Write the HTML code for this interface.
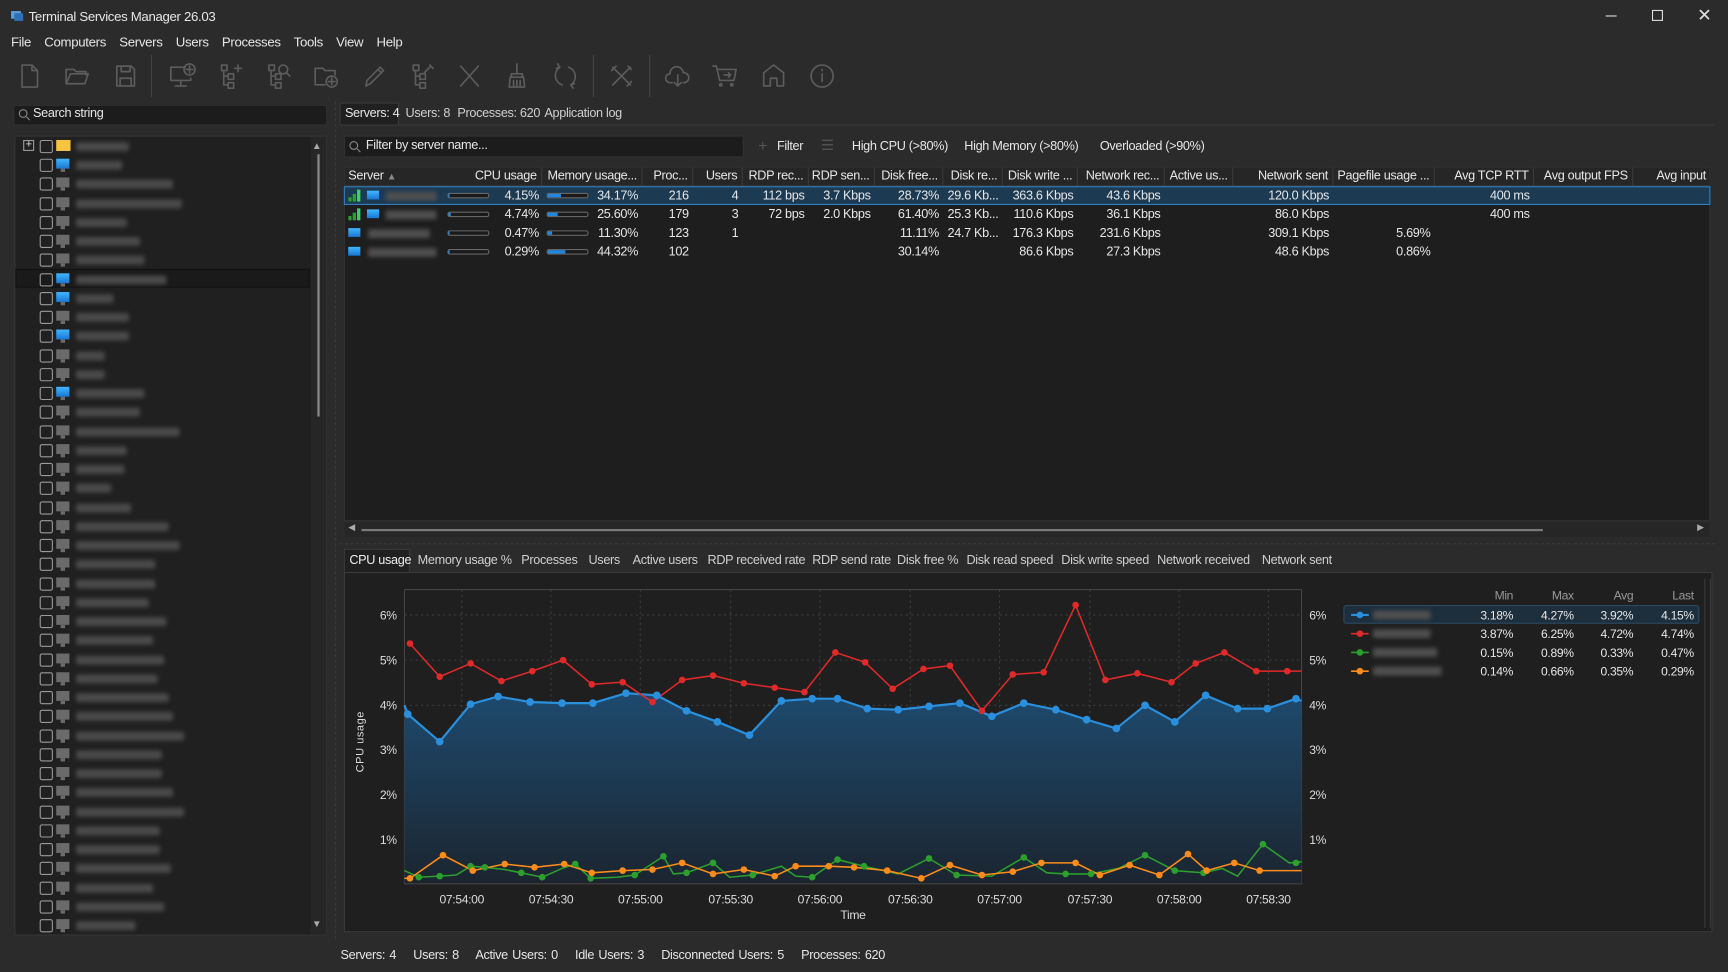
<!DOCTYPE html>
<html><head><meta charset="utf-8"><style>
*{box-sizing:border-box;margin:0;padding:0}
html,body{width:1728px;height:972px;overflow:hidden;background:#2b2b2b}
#s{position:absolute;left:0;top:0;width:1568px;height:882px;transform:scale(1.10204);transform-origin:0 0;background:#2b2b2b;font-family:"Liberation Sans",sans-serif;font-size:11.5px;color:#e6e6e6;letter-spacing:-0.3px}
.a{position:absolute;white-space:nowrap}
.ic{position:absolute;top:56px;width:26px;height:26px}
.ic svg{width:26px;height:26px;fill:none;stroke:#5c5c5c;stroke-width:1.5;stroke-linecap:round;stroke-linejoin:round}
.row{position:absolute;left:20px;height:17px;width:262px}
.cb{position:absolute;left:16px;top:3px;width:12px;height:12px;border:1px solid #9a9a9a;border-radius:2px}
.mon{position:absolute;left:31px;top:3px;width:12px;height:9px;background:#6a6a6a}
.mon:after{content:"";position:absolute;left:4px;top:9px;width:4px;height:3px;background:#6a6a6a}
.mon.b{background:linear-gradient(#3fb6ff,#1976d2)}
.nm{position:absolute;left:49px;top:5px;height:8px;background:#4a4a4a;filter:blur(2px);border-radius:2px}
.hd{position:absolute;top:152px;height:17px;line-height:17px;color:#e6e6e6;text-align:right;border-right:1px solid #3a3a3a;padding-right:4px}
.c{position:absolute;text-align:right;height:17px;line-height:17px}
.bar{position:absolute;width:38px;height:5px;border:1px solid #666;background:#1a1a1a;border-radius:2px}
.bar i{display:block;height:100%;background:#1e88e5}
.tab{position:absolute;top:500px;color:#cfcfcf}
</style></head><body><div id="s">
<svg class="a" style="left:9px;top:8px" width="13" height="13"><rect x="1" y="2" width="9" height="7" fill="#5b9bd5"/><rect x="4" y="4" width="8" height="7" fill="#2e6fb8"/></svg>
<div class="a" style="left:26px;top:8px;font-size:12px">Terminal Services Manager 26.03</div>
<div class="a" style="left:1457px;top:14px;width:10px;height:1px;background:#ddd"></div>
<div class="a" style="left:1499px;top:9px;width:10px;height:10px;border:1px solid #ddd"></div>
<div class="a" style="left:1540px;top:4px;font-size:16px;color:#ddd">✕</div>
<div class="a" style="left:10px;top:31px;font-size:12px;word-spacing:9px">File Computers Servers Users Processes Tools View Help</div>
<div class="ic" style="left:14px"><svg viewBox="0 0 26 26"><path d="M6 3h9l5 5v15H6z M15 3v5h5"/></svg></div>
<div class="ic" style="left:57px"><svg viewBox="0 0 26 26"><path d="M3 7h7l2 2h9v3 M3 7v13h17l3-9H7l-4 9"/></svg></div>
<div class="ic" style="left:101px"><svg viewBox="0 0 26 26"><path d="M5 4h13l3 3v15H5z M9 4v5h8V4 M8 22v-7h10v7"/></svg></div>
<div class="a" style="left:137px;top:50px;width:1px;height:38px;background:#444"></div>
<div class="ic" style="left:152px"><svg viewBox="0 0 26 26"><path d="M16 5H3v12h18v-2 M12 17v4 M7 22h10"/><circle cx="20" cy="7" r="5"/><path d="M20 4v6M17 7h6"/></svg></div>
<div class="ic" style="left:197px"><svg viewBox="0 0 26 26"><rect x="4" y="3" width="5" height="5"/><rect x="10" y="11" width="5" height="5"/><rect x="10" y="19" width="5" height="5"/><path d="M6 8v13h4M6 13h4M19 3v6M16 6h6"/></svg></div>
<div class="ic" style="left:240px"><svg viewBox="0 0 26 26"><rect x="4" y="3" width="5" height="5"/><rect x="10" y="11" width="5" height="5"/><rect x="10" y="19" width="5" height="5"/><path d="M6 8v13h4M6 13h4"/><circle cx="17" cy="7" r="4"/><path d="M20 10l3 3"/></svg></div>
<div class="ic" style="left:283px"><svg viewBox="0 0 26 26"><path d="M3 6h7l2 2h9v4 M3 6v15h9"/><circle cx="18" cy="18" r="5"/><path d="M18 15v6M15 18h6"/></svg></div>
<div class="ic" style="left:327px"><svg viewBox="0 0 26 26"><path d="M5 22l1-5L18 5l3 3L9 20z M16 7l3 3"/></svg></div>
<div class="ic" style="left:371px"><svg viewBox="0 0 26 26"><rect x="4" y="3" width="5" height="5"/><rect x="10" y="11" width="5" height="5"/><rect x="10" y="19" width="5" height="5"/><path d="M6 8v13h4M6 13h4M14 10l6-6M19 3l3 3"/></svg></div>
<div class="ic" style="left:413px"><svg viewBox="0 0 26 26"><path d="M5 4l16 18M21 4L5 22"/></svg></div>
<div class="ic" style="left:456px"><svg viewBox="0 0 26 26"><path d="M13 2v9 M8 11h10v3H8z M7 14l-1 9h14l-1-9 M10 17v5M13 17v5M16 17v5"/></svg></div>
<div class="ic" style="left:500px"><svg viewBox="0 0 26 26"><path d="M8 5a9 9 0 0 0 2 16 M18 21a9 9 0 0 0-2-16 M6 2l2 3-3 1 M20 24l-2-3 3-1"/></svg></div>
<div class="a" style="left:538px;top:50px;width:1px;height:38px;background:#444"></div>
<div class="ic" style="left:551px"><svg viewBox="0 0 26 26"><path d="M5 5l16 16M21 5L5 21M4 8l4-4M18 22l4-4M19 4l3 3"/></svg></div>
<div class="a" style="left:589px;top:50px;width:1px;height:38px;background:#444"></div>
<div class="ic" style="left:602px"><svg viewBox="0 0 26 26"><path d="M8 19H6a4 4 0 0 1 0-8 6 6 0 0 1 12-1 4 4 0 0 1 1 9h-1 M13 12v10M10 19l3 3 3-3"/></svg></div>
<div class="ic" style="left:645px"><svg viewBox="0 0 26 26"><path d="M2 4h3l3 13h13l2-10H6 M12 12h6M16 10l2 2-2 2"/><circle cx="9" cy="21" r="1"/><circle cx="19" cy="21" r="1"/></svg></div>
<div class="ic" style="left:689px"><svg viewBox="0 0 26 26"><path d="M4 22V10l9-7 9 7v12h-6v-7h-6v7z"/></svg></div>
<div class="ic" style="left:733px"><svg viewBox="0 0 26 26"><circle cx="13" cy="13" r="10"/><path d="M13 11v7M13 7v1"/></svg></div>

<div class="a" style="left:12px;top:95px;width:285px;height:19px;background:#1c1c1c;border:1px solid #333"></div>
<svg class="a" style="left:16px;top:98px" width="12" height="12"><circle cx="5" cy="5" r="3.5" fill="none" stroke="#888"/><path d="M8 8l3 3" stroke="#888"/></svg>
<div class="a" style="left:30px;top:97px">Search string</div>
<div class="a" style="left:304px;top:92px;width:1px;height:760px;border-left:1px dashed #3a3a3a"></div>
<div class="a" style="left:13px;top:123px;width:284px;height:726px;background:#202020;border:1px solid #363636"></div>
<div class="a" style="left:282px;top:124px;width:14px;height:724px;background:#262626"></div>
<div class="a" style="left:283px;top:127px;font-size:9px;color:#aaa">▲</div>
<div class="a" style="left:283px;top:833px;font-size:9px;color:#aaa">▼</div>
<div class="a" style="left:288px;top:140px;width:2px;height:238px;background:#8a8a8a"></div>
<div class="a" style="left:14px;top:244px;width:267px;height:17px;background:#1a1a1a;border:1px solid #111"></div>

<div class="a" style="left:308px;top:93px;width:54px;height:21px;background:#202020;border:1px solid #3a3a3a;border-bottom:none"></div>
<div class="a" style="left:313px;top:97px">Servers: 4</div>
<div class="a" style="left:368px;top:97px;color:#cfcfcf">Users: 8</div>
<div class="a" style="left:415px;top:97px;color:#cfcfcf">Processes: 620</div>
<div class="a" style="left:494px;top:97px;color:#cfcfcf">Application log</div>
<div class="a" style="left:308px;top:113px;width:1248px;height:378px;background:#2b2b2b;border-top:1px solid #3a3a3a"></div>
<div class="a" style="left:312px;top:123px;width:363px;height:20px;background:#1c1c1c;border:1px solid #333"></div>
<svg class="a" style="left:316px;top:127px" width="12" height="12"><circle cx="5" cy="5" r="3.5" fill="none" stroke="#888"/><path d="M8 8l3 3" stroke="#888"/></svg>
<div class="a" style="left:332px;top:126px">Filter by server name...</div>
<div class="a" style="left:688px;top:124px;color:#555;font-size:14px">+</div>
<div class="a" style="left:705px;top:127px">Filter</div>
<div class="a" style="left:745px;top:124px;color:#555;font-size:13px">☰</div>
<div class="a" style="left:773px;top:127px">High CPU (&gt;80%)</div>
<div class="a" style="left:875px;top:127px">High Memory (&gt;80%)</div>
<div class="a" style="left:998px;top:127px">Overloaded (&gt;90%)</div>
<div class="a" style="left:312px;top:151px;width:1240px;height:322px;background:#1e1e1e;border:1px solid #333"></div>
<div class="a" style="left:313px;top:152px;width:1238px;height:17px;background:#262626;border-bottom:1px solid #3a3a3a"></div>
<div class="a" style="left:316px;top:154px">Server <span style="color:#888;font-size:9px">▲</span></div>
<div class="hd" style="left:402px;width:90px">CPU usage</div>
<div class="hd" style="left:492px;width:91px">Memory usage...</div>
<div class="hd" style="left:583px;width:46px">Proc...</div>
<div class="hd" style="left:629px;width:45px">Users</div>
<div class="hd" style="left:674px;width:60px">RDP rec...</div>
<div class="hd" style="left:734px;width:60px">RDP sen...</div>
<div class="hd" style="left:794px;width:62px">Disk free...</div>
<div class="hd" style="left:856px;width:54px">Disk re...</div>
<div class="hd" style="left:910px;width:68px">Disk write ...</div>
<div class="hd" style="left:978px;width:79px">Network rec...</div>
<div class="hd" style="left:1057px;width:62px">Active us...</div>
<div class="hd" style="left:1119px;width:91px">Network sent</div>
<div class="hd" style="left:1210px;width:92px">Pagefile usage ...</div>
<div class="hd" style="left:1302px;width:90px">Avg TCP RTT</div>
<div class="hd" style="left:1392px;width:90px">Avg output FPS</div>
<div class="hd" style="left:1482px;width:70px;border:none">Avg input</div>
<div class="a" style="left:312px;top:169px;width:1240px;height:17px;background:#1c3a52;border:1px solid #2f7fc0"></div>
<div class="a" style="left:313px;top:474px;width:1238px;height:13px;background:#262626"></div>
<div class="a" style="left:316px;top:474px;font-size:8px;color:#aaa">◀</div>
<div class="a" style="left:1540px;top:474px;font-size:8px;color:#aaa">▶</div>
<div class="a" style="left:328px;top:480px;width:1072px;height:2px;background:#7a7a7a"></div>

<div class="a" style="left:308px;top:493px;width:1248px;height:1px;border-top:1px dashed #3a3a3a"></div>
<div class="a" style="left:312px;top:498px;width:60px;height:21px;background:#202020;border:1px solid #3a3a3a;border-bottom:none"></div>
<div class="tab" style="left:317px;top:503px;color:#eee">CPU usage</div>
<div class="tab" style="left:379px;top:503px">Memory usage %</div>
<div class="tab" style="left:473px;top:503px">Processes</div>
<div class="tab" style="left:534px;top:503px">Users</div>
<div class="tab" style="left:574px;top:503px">Active users</div>
<div class="tab" style="left:642px;top:503px">RDP received rate</div>
<div class="tab" style="left:737px;top:503px">RDP send rate</div>
<div class="tab" style="left:814px;top:503px">Disk free %</div>
<div class="tab" style="left:877px;top:503px">Disk read speed</div>
<div class="tab" style="left:963px;top:503px">Disk write speed</div>
<div class="tab" style="left:1050px;top:503px">Network received</div>
<div class="tab" style="left:1145px;top:503px">Network sent</div>
<div class="a" style="left:312px;top:519px;width:1242px;height:327px;background:#1f1f1f;border:1px solid #3a3a3a"></div>

<svg class="a" style="left:0;top:0" width="1568" height="882" font-family="Liberation Sans" font-size="11">
<defs><linearGradient id="g" x1="0" y1="0" x2="0" y2="1"><stop offset="0" stop-color="#1e4a6e"/><stop offset="1" stop-color="#1b2530"/></linearGradient></defs>
<g stroke="#3d3d3d" stroke-dasharray="2 3">
<path d="M367 558H1181M367 599H1181M367 640H1181M367 680H1181M367 721H1181M367 762H1181"/>
<path d="M419 535V800M500 535V800M581 535V800M663 535V800M744 535V800M826 535V800M907 535V800M989 535V800M1070 535V800M1151 535V800"/>
</g>
<path d="M367 535H1181M367 535V802H1181V535" fill="none" stroke="#444"/>
<polygon fill="url(#g)" points="367,648 370,648 399,673 427,639 452,632 481,637 510,638 538,638 568,629 596,631 623,645 651,655 680,667 709,636 737,634 760,634 787,643 815,644 843,641 871,638 900,650 929,638 958,644 986,653 1013,661 1039,640 1066,655 1094,631 1123,643 1150,643 1176,634 1181,636 1181,801 367,801"/>
<g fill="none" stroke-width="1.4">
<polyline stroke="#2a8fdc" stroke-width="2" points="367,640 370,648 399,673 427,639 452,632 481,637 510,638 538,638 568,629 596,631 623,645 651,655 680,667 709,636 737,634 760,634 787,643 815,644 843,641 871,638 900,650 929,638 958,644 986,653 1013,661 1039,640 1066,655 1094,631 1123,643 1150,643 1176,634 1181,636"/>
<polyline stroke="#e02a2a" points="372,584 399,614 427,602 455,618 483,609 511,599 537,621 565,619 592,637 619,617 647,613 675,620 703,624 730,628 758,592 785,601 810,625 838,607 862,604 891,645 919,612 947,610 976,549 1003,617 1032,611 1063,619 1085,602 1111,592 1140,609 1168,609 1181,609"/>
<polyline stroke="#2ca02c" points="367,790 380,796 399,795 414,794 427,786 440,787 458,789 473,792 492,796 510,788 522,784 536,797 560,796 576,794 602,777 611,793 623,792 647,783 662,796 683,794 709,786 722,795 737,796 760,780 784,786 815,793 843,779 868,794 900,795 929,778 950,792 967,793 990,793 1015,788 1039,776 1066,790 1092,792 1109,788 1123,795 1146,766 1170,783 1181,782"/>
<polyline stroke="#ff8c1a" points="367,797 372,797 402,776 429,790 458,784 485,787 512,784 537,792 565,790 592,789 619,783 647,793 675,789 703,795 722,786 752,786 775,787 805,790 836,797 862,785 891,794 919,791 945,783 976,783 998,794 1025,785 1052,794 1078,775 1095,790 1120,783 1143,790 1168,790 1181,790"/>
</g>
<g fill="#2a8fdc"><circle cx="370" cy="648" r="3.5"/><circle cx="399" cy="673" r="3.5"/><circle cx="427" cy="639" r="3.5"/><circle cx="452" cy="632" r="3.5"/><circle cx="481" cy="637" r="3.5"/><circle cx="510" cy="638" r="3.5"/><circle cx="538" cy="638" r="3.5"/><circle cx="568" cy="629" r="3.5"/><circle cx="596" cy="631" r="3.5"/><circle cx="623" cy="645" r="3.5"/><circle cx="651" cy="655" r="3.5"/><circle cx="680" cy="667" r="3.5"/><circle cx="709" cy="636" r="3.5"/><circle cx="737" cy="634" r="3.5"/><circle cx="760" cy="634" r="3.5"/><circle cx="787" cy="643" r="3.5"/><circle cx="815" cy="644" r="3.5"/><circle cx="843" cy="641" r="3.5"/><circle cx="871" cy="638" r="3.5"/><circle cx="900" cy="650" r="3.5"/><circle cx="929" cy="638" r="3.5"/><circle cx="958" cy="644" r="3.5"/><circle cx="986" cy="653" r="3.5"/><circle cx="1013" cy="661" r="3.5"/><circle cx="1039" cy="640" r="3.5"/><circle cx="1066" cy="655" r="3.5"/><circle cx="1094" cy="631" r="3.5"/><circle cx="1123" cy="643" r="3.5"/><circle cx="1150" cy="643" r="3.5"/><circle cx="1176" cy="634" r="3.5"/></g>
<g fill="#e02a2a"><circle cx="372" cy="584" r="3"/><circle cx="399" cy="614" r="3"/><circle cx="427" cy="602" r="3"/><circle cx="455" cy="618" r="3"/><circle cx="483" cy="609" r="3"/><circle cx="511" cy="599" r="3"/><circle cx="537" cy="621" r="3"/><circle cx="565" cy="619" r="3"/><circle cx="592" cy="637" r="3"/><circle cx="619" cy="617" r="3"/><circle cx="647" cy="613" r="3"/><circle cx="675" cy="620" r="3"/><circle cx="703" cy="624" r="3"/><circle cx="730" cy="628" r="3"/><circle cx="758" cy="592" r="3"/><circle cx="785" cy="601" r="3"/><circle cx="810" cy="625" r="3"/><circle cx="838" cy="607" r="3"/><circle cx="862" cy="604" r="3"/><circle cx="891" cy="645" r="3"/><circle cx="919" cy="612" r="3"/><circle cx="947" cy="610" r="3"/><circle cx="976" cy="549" r="3"/><circle cx="1003" cy="617" r="3"/><circle cx="1032" cy="611" r="3"/><circle cx="1063" cy="619" r="3"/><circle cx="1085" cy="602" r="3"/><circle cx="1111" cy="592" r="3"/><circle cx="1140" cy="609" r="3"/><circle cx="1168" cy="609" r="3"/></g>
<g fill="#2ca02c"><circle cx="380" cy="796" r="3"/><circle cx="399" cy="795" r="3"/><circle cx="427" cy="786" r="3"/><circle cx="440" cy="787" r="3"/><circle cx="473" cy="792" r="3"/><circle cx="492" cy="796" r="3"/><circle cx="522" cy="784" r="3"/><circle cx="536" cy="797" r="3"/><circle cx="576" cy="794" r="3"/><circle cx="602" cy="777" r="3"/><circle cx="623" cy="792" r="3"/><circle cx="647" cy="783" r="3"/><circle cx="683" cy="794" r="3"/><circle cx="737" cy="796" r="3"/><circle cx="760" cy="780" r="3"/><circle cx="784" cy="786" r="3"/><circle cx="843" cy="779" r="3"/><circle cx="868" cy="794" r="3"/><circle cx="929" cy="778" r="3"/><circle cx="967" cy="793" r="3"/><circle cx="990" cy="793" r="3"/><circle cx="1039" cy="776" r="3"/><circle cx="1066" cy="790" r="3"/><circle cx="1092" cy="792" r="3"/><circle cx="1146" cy="766" r="3"/><circle cx="1176" cy="783" r="3"/></g>
<g fill="#ff8c1a"><circle cx="372" cy="797" r="3"/><circle cx="402" cy="776" r="3"/><circle cx="429" cy="790" r="3"/><circle cx="458" cy="784" r="3"/><circle cx="485" cy="787" r="3"/><circle cx="512" cy="784" r="3"/><circle cx="537" cy="792" r="3"/><circle cx="565" cy="790" r="3"/><circle cx="592" cy="789" r="3"/><circle cx="619" cy="783" r="3"/><circle cx="647" cy="793" r="3"/><circle cx="675" cy="789" r="3"/><circle cx="703" cy="795" r="3"/><circle cx="722" cy="786" r="3"/><circle cx="752" cy="786" r="3"/><circle cx="775" cy="787" r="3"/><circle cx="805" cy="790" r="3"/><circle cx="836" cy="797" r="3"/><circle cx="862" cy="785" r="3"/><circle cx="891" cy="794" r="3"/><circle cx="919" cy="791" r="3"/><circle cx="945" cy="783" r="3"/><circle cx="976" cy="783" r="3"/><circle cx="998" cy="794" r="3"/><circle cx="1025" cy="785" r="3"/><circle cx="1052" cy="794" r="3"/><circle cx="1078" cy="775" r="3"/><circle cx="1095" cy="790" r="3"/><circle cx="1120" cy="783" r="3"/><circle cx="1143" cy="790" r="3"/></g>
<g fill="#dcdcdc" text-anchor="end"><text x="360" y="562">6%</text><text x="360" y="603">5%</text><text x="360" y="644">4%</text><text x="360" y="684">3%</text><text x="360" y="725">2%</text><text x="360" y="766">1%</text></g>
<g fill="#dcdcdc"><text x="1188" y="562">6%</text><text x="1188" y="603">5%</text><text x="1188" y="644">4%</text><text x="1188" y="684">3%</text><text x="1188" y="725">2%</text><text x="1188" y="766">1%</text></g>
<g fill="#dcdcdc" text-anchor="middle"><text x="419" y="820">07:54:00</text><text x="500" y="820">07:54:30</text><text x="581" y="820">07:55:00</text><text x="663" y="820">07:55:30</text><text x="744" y="820">07:56:00</text><text x="826" y="820">07:56:30</text><text x="907" y="820">07:57:00</text><text x="989" y="820">07:57:30</text><text x="1070" y="820">07:58:00</text><text x="1151" y="820">07:58:30</text><text x="774" y="834">Time</text></g>
<text x="330" y="673" fill="#dcdcdc" text-anchor="middle" transform="rotate(-90 330 673)" font-size="10" letter-spacing="0.5">CPU usage</text>
<g fill="#999" text-anchor="end"><text x="1373" y="544">Min</text><text x="1428" y="544">Max</text><text x="1482" y="544">Avg</text><text x="1537" y="544">Last</text></g>
<rect x="1219.5" y="549.5" width="322" height="16" rx="2" fill="#1d2e3c" stroke="#2c4a62"/>
<path d="M1226 558h16" stroke="#2a8fdc" stroke-width="2"/><circle cx="1234" cy="558" r="3" fill="#2a8fdc"/>
<path d="M1226 575h16" stroke="#e02a2a" stroke-width="1.5"/><circle cx="1234" cy="575" r="3" fill="#e02a2a"/>
<path d="M1226 592h16" stroke="#2ca02c" stroke-width="1.5"/><circle cx="1234" cy="592" r="3" fill="#2ca02c"/>
<path d="M1226 609h16" stroke="#ff8c1a" stroke-width="1.5"/><circle cx="1234" cy="609" r="3" fill="#ff8c1a"/>
<g fill="#4f4f4f" style="filter:blur(2px)"><rect x="1246" y="554" width="52" height="8"/><rect x="1246" y="571" width="52" height="8"/><rect x="1246" y="588" width="58" height="8"/><rect x="1246" y="605" width="62" height="8"/></g>
<g fill="#e6e6e6" text-anchor="end">
<text x="1373" y="562">3.18%</text><text x="1428" y="562">4.27%</text><text x="1482" y="562">3.92%</text><text x="1537" y="562">4.15%</text>
<text x="1373" y="579">3.87%</text><text x="1428" y="579">6.25%</text><text x="1482" y="579">4.72%</text><text x="1537" y="579">4.74%</text>
<text x="1373" y="596">0.15%</text><text x="1428" y="596">0.89%</text><text x="1482" y="596">0.33%</text><text x="1537" y="596">0.47%</text>
<text x="1373" y="613">0.14%</text><text x="1428" y="613">0.66%</text><text x="1482" y="613">0.35%</text><text x="1537" y="613">0.29%</text>
</g>
<path d="M1547 525V842M1552 525V842" stroke="#3a3a3a"/>
</svg>

<div class="a" style="left:316px;top:172px"><svg width="12" height="11"><rect x="0" y="7" width="3" height="4" fill="#2ca02c"/><rect x="4" y="4" width="3" height="7" fill="#2ca02c"/><rect x="8" y="0" width="3" height="11" fill="#3fcf6f"/></svg></div>
<div class="a" style="left:316px;top:189px"><svg width="12" height="11"><rect x="0" y="7" width="3" height="4" fill="#2ca02c"/><rect x="4" y="4" width="3" height="7" fill="#2ca02c"/><rect x="8" y="0" width="3" height="11" fill="#3fcf6f"/></svg></div>
<div class="a" style="left:333px;top:173px;width:11px;height:8px;background:linear-gradient(#3fb6ff,#1976d2)"></div>
<div class="a" style="left:333px;top:190px;width:11px;height:8px;background:linear-gradient(#3fb6ff,#1976d2)"></div>
<div class="a" style="left:316px;top:207px;width:11px;height:8px;background:linear-gradient(#3fb6ff,#1976d2)"></div>
<div class="a" style="left:316px;top:224px;width:11px;height:8px;background:linear-gradient(#3fb6ff,#1976d2)"></div>
<div class="a" style="left:350px;top:174px;width:46px;height:8px;background:#4f4f4f;filter:blur(2px)"></div>
<div class="a" style="left:350px;top:191px;width:46px;height:8px;background:#4f4f4f;filter:blur(2px)"></div>
<div class="a" style="left:334px;top:208px;width:56px;height:8px;background:#4f4f4f;filter:blur(2px)"></div>
<div class="a" style="left:334px;top:225px;width:62px;height:8px;background:#4f4f4f;filter:blur(2px)"></div>
<div class="bar" style="left:406px;top:175px"><i style="width:4%"></i></div>
<div class="bar" style="left:406px;top:192px"><i style="width:5%"></i></div>
<div class="bar" style="left:406px;top:209px"><i style="width:1%"></i></div>
<div class="bar" style="left:406px;top:226px"><i style="width:1%"></i></div>
<div class="bar" style="left:496px;top:175px"><i style="width:34%"></i></div>
<div class="bar" style="left:496px;top:192px"><i style="width:26%"></i></div>
<div class="bar" style="left:496px;top:209px"><i style="width:11%"></i></div>
<div class="bar" style="left:496px;top:226px"><i style="width:44%"></i></div>
<div class="a" style="top:170px;left:0;height:17px;line-height:17px">
<span class="c" style="left:430px;width:59px">4.15%</span><span class="c" style="left:520px;width:59px">34.17%</span><span class="c" style="left:583px;width:42px">216</span><span class="c" style="left:629px;width:41px">4</span><span class="c" style="left:674px;width:56px">112 bps</span><span class="c" style="left:734px;width:56px">3.7 Kbps</span><span class="c" style="left:794px;width:58px">28.73%</span><span class="c" style="left:856px;width:50px">29.6 Kb...</span><span class="c" style="left:910px;width:64px">363.6 Kbps</span><span class="c" style="left:978px;width:75px">43.6 Kbps</span><span class="c" style="left:1119px;width:87px">120.0 Kbps</span><span class="c" style="left:1302px;width:86px">400 ms</span></div>
<div class="a" style="top:187px;left:0;height:17px;line-height:17px">
<span class="c" style="left:430px;width:59px">4.74%</span><span class="c" style="left:520px;width:59px">25.60%</span><span class="c" style="left:583px;width:42px">179</span><span class="c" style="left:629px;width:41px">3</span><span class="c" style="left:674px;width:56px">72 bps</span><span class="c" style="left:734px;width:56px">2.0 Kbps</span><span class="c" style="left:794px;width:58px">61.40%</span><span class="c" style="left:856px;width:50px">25.3 Kb...</span><span class="c" style="left:910px;width:64px">110.6 Kbps</span><span class="c" style="left:978px;width:75px">36.1 Kbps</span><span class="c" style="left:1119px;width:87px">86.0 Kbps</span><span class="c" style="left:1302px;width:86px">400 ms</span></div>
<div class="a" style="top:204px;left:0;height:17px;line-height:17px">
<span class="c" style="left:430px;width:59px">0.47%</span><span class="c" style="left:520px;width:59px">11.30%</span><span class="c" style="left:583px;width:42px">123</span><span class="c" style="left:629px;width:41px">1</span><span class="c" style="left:794px;width:58px">11.11%</span><span class="c" style="left:856px;width:50px">24.7 Kb...</span><span class="c" style="left:910px;width:64px">176.3 Kbps</span><span class="c" style="left:978px;width:75px">231.6 Kbps</span><span class="c" style="left:1119px;width:87px">309.1 Kbps</span><span class="c" style="left:1210px;width:88px">5.69%</span></div>
<div class="a" style="top:221px;left:0;height:17px;line-height:17px">
<span class="c" style="left:430px;width:59px">0.29%</span><span class="c" style="left:520px;width:59px">44.32%</span><span class="c" style="left:583px;width:42px">102</span><span class="c" style="left:794px;width:58px">30.14%</span><span class="c" style="left:910px;width:64px">86.6 Kbps</span><span class="c" style="left:978px;width:75px">27.3 Kbps</span><span class="c" style="left:1119px;width:87px">48.6 Kbps</span><span class="c" style="left:1210px;width:88px">0.86%</span></div>

<div class="a" style="left:21px;top:127px;width:10px;height:10px;border:1px solid #999;font-size:10px;line-height:8px;text-align:center;color:#ddd">+</div>
<div class="row" style="top:124px"><div class="cb"></div><div class="a" style="left:31px;top:3px;width:13px;height:10px;background:#f5c542"></div><div class="nm" style="width:48px"></div></div>
<div class="row" style="top:141px"><div class="cb"></div><div class="mon b"></div><div class="nm" style="width:42px"></div></div>
<div class="row" style="top:158px"><div class="cb"></div><div class="mon"></div><div class="nm" style="width:88px"></div></div>
<div class="row" style="top:176px"><div class="cb"></div><div class="mon"></div><div class="nm" style="width:96px"></div></div>
<div class="row" style="top:193px"><div class="cb"></div><div class="mon"></div><div class="nm" style="width:46px"></div></div>
<div class="row" style="top:210px"><div class="cb"></div><div class="mon"></div><div class="nm" style="width:58px"></div></div>
<div class="row" style="top:227px"><div class="cb"></div><div class="mon"></div><div class="nm" style="width:62px"></div></div>
<div class="row" style="top:245px"><div class="cb"></div><div class="mon b"></div><div class="nm" style="width:82px"></div></div>
<div class="row" style="top:262px"><div class="cb"></div><div class="mon b"></div><div class="nm" style="width:34px"></div></div>
<div class="row" style="top:279px"><div class="cb"></div><div class="mon"></div><div class="nm" style="width:48px"></div></div>
<div class="row" style="top:296px"><div class="cb"></div><div class="mon b"></div><div class="nm" style="width:48px"></div></div>
<div class="row" style="top:314px"><div class="cb"></div><div class="mon"></div><div class="nm" style="width:26px"></div></div>
<div class="row" style="top:331px"><div class="cb"></div><div class="mon"></div><div class="nm" style="width:26px"></div></div>
<div class="row" style="top:348px"><div class="cb"></div><div class="mon b"></div><div class="nm" style="width:62px"></div></div>
<div class="row" style="top:365px"><div class="cb"></div><div class="mon"></div><div class="nm" style="width:58px"></div></div>
<div class="row" style="top:383px"><div class="cb"></div><div class="mon"></div><div class="nm" style="width:94px"></div></div>
<div class="row" style="top:400px"><div class="cb"></div><div class="mon"></div><div class="nm" style="width:46px"></div></div>
<div class="row" style="top:417px"><div class="cb"></div><div class="mon"></div><div class="nm" style="width:44px"></div></div>
<div class="row" style="top:434px"><div class="cb"></div><div class="mon"></div><div class="nm" style="width:32px"></div></div>
<div class="row" style="top:452px"><div class="cb"></div><div class="mon"></div><div class="nm" style="width:50px"></div></div>
<div class="row" style="top:469px"><div class="cb"></div><div class="mon"></div><div class="nm" style="width:84px"></div></div>
<div class="row" style="top:486px"><div class="cb"></div><div class="mon"></div><div class="nm" style="width:94px"></div></div>
<div class="row" style="top:503px"><div class="cb"></div><div class="mon"></div><div class="nm" style="width:72px"></div></div>
<div class="row" style="top:521px"><div class="cb"></div><div class="mon"></div><div class="nm" style="width:72px"></div></div>
<div class="row" style="top:538px"><div class="cb"></div><div class="mon"></div><div class="nm" style="width:66px"></div></div>
<div class="row" style="top:555px"><div class="cb"></div><div class="mon"></div><div class="nm" style="width:82px"></div></div>
<div class="row" style="top:572px"><div class="cb"></div><div class="mon"></div><div class="nm" style="width:70px"></div></div>
<div class="row" style="top:590px"><div class="cb"></div><div class="mon"></div><div class="nm" style="width:80px"></div></div>
<div class="row" style="top:607px"><div class="cb"></div><div class="mon"></div><div class="nm" style="width:74px"></div></div>
<div class="row" style="top:624px"><div class="cb"></div><div class="mon"></div><div class="nm" style="width:84px"></div></div>
<div class="row" style="top:641px"><div class="cb"></div><div class="mon"></div><div class="nm" style="width:88px"></div></div>
<div class="row" style="top:659px"><div class="cb"></div><div class="mon"></div><div class="nm" style="width:98px"></div></div>
<div class="row" style="top:676px"><div class="cb"></div><div class="mon"></div><div class="nm" style="width:78px"></div></div>
<div class="row" style="top:693px"><div class="cb"></div><div class="mon"></div><div class="nm" style="width:78px"></div></div>
<div class="row" style="top:710px"><div class="cb"></div><div class="mon"></div><div class="nm" style="width:88px"></div></div>
<div class="row" style="top:728px"><div class="cb"></div><div class="mon"></div><div class="nm" style="width:98px"></div></div>
<div class="row" style="top:745px"><div class="cb"></div><div class="mon"></div><div class="nm" style="width:76px"></div></div>
<div class="row" style="top:762px"><div class="cb"></div><div class="mon"></div><div class="nm" style="width:76px"></div></div>
<div class="row" style="top:779px"><div class="cb"></div><div class="mon"></div><div class="nm" style="width:86px"></div></div>
<div class="row" style="top:797px"><div class="cb"></div><div class="mon"></div><div class="nm" style="width:70px"></div></div>
<div class="row" style="top:814px"><div class="cb"></div><div class="mon"></div><div class="nm" style="width:80px"></div></div>
<div class="row" style="top:831px"><div class="cb"></div><div class="mon"></div><div class="nm" style="width:54px"></div></div>

<div class="a" style="left:309px;top:861px;word-spacing:1px">Servers: 4 &nbsp;&nbsp; Users: 8 &nbsp;&nbsp; Active Users: 0 &nbsp;&nbsp; Idle Users: 3 &nbsp;&nbsp; Disconnected Users: 5 &nbsp;&nbsp; Processes: 620</div>
</div></body></html>
